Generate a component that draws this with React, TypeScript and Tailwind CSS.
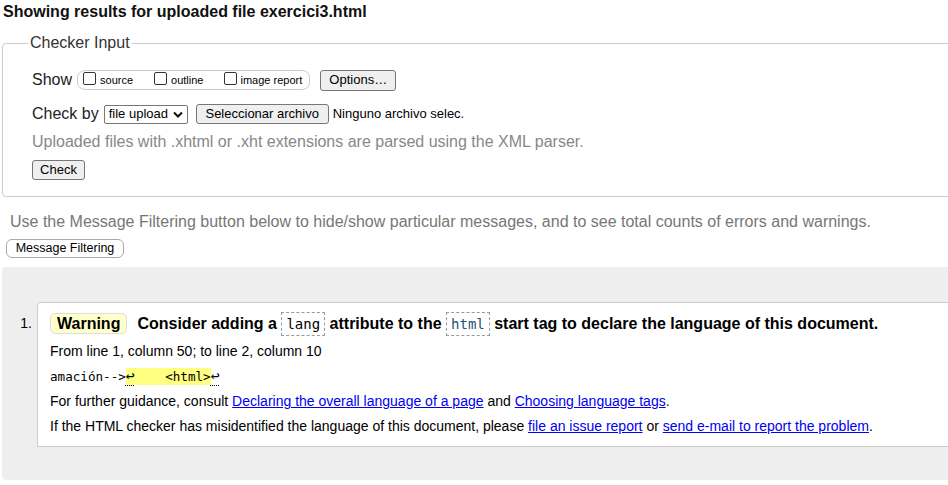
const sans = "font-['Liberation_Sans',Arial,sans-serif]";
const mono = "font-['DejaVu_Sans_Mono','Liberation_Mono',monospace]";

function Box({ label }: { label: string }) {
  return (
    <span className="flex items-center">
      <span className="mb-[3px] h-[13px] w-[13px] rounded-[2px] border border-[#333] bg-white" />
      <span className="ml-[4px] text-[11px] leading-[13px]">{label}</span>
    </span>
  );
}

function Btn({ children, className = "" }: { children: React.ReactNode; className?: string }) {
  return (
    <span
      className={`inline-flex h-[20px] items-center rounded-[3px] border border-[#767676] bg-[#efefef] px-[7px] text-[13px] ${className}`}
    >
      {children}
    </span>
  );
}

function Code({ children, className = "" }: { children: React.ReactNode; className?: string }) {
  return (
    <span
      className={`${mono} inline-block border border-dashed border-[#999] bg-white px-[4px] text-[14px] font-normal leading-[22px] ${className}`}
    >
      {children}
    </span>
  );
}

export default function App() {
  return (
    <div className={`${sans} h-[485px] w-[948px] overflow-hidden bg-white text-black`}>
      {/* Title */}
      <h1 className="pl-[3px] pt-[2px] text-[16px] font-bold leading-[20px] text-[#111]">
        Showing results for uploaded file exercici3.html
      </h1>

      {/* Checker input */}
      <fieldset className="-mr-[30px] ml-[2px] mt-[11px] rounded-bl-[4px] rounded-tl-[4px] border border-[#ccc] pb-[16px] pl-[29px] pt-[16px]">
        <legend className="-ml-[4px] px-[2px] text-[16px] leading-[20px] text-[#333]">Checker Input</legend>

        <div className="flex h-[22px] items-center">
          <span className="text-[16px] leading-[20px] text-[#222]">Show</span>
          <span className="ml-[5px] flex h-[20px] items-center rounded-[8px] border border-[#ccc] pl-[5px] pr-[7px]">
            <Box label="source" />
            <span className="w-[21px]" />
            <Box label="outline" />
            <span className="w-[21px]" />
            <span className="flex items-center">
              <span className="mb-[3px] h-[13px] w-[13px] rounded-[2px] border border-[#333] bg-white" />
              <span className="ml-[3px] text-[11px] leading-[13px]">image report</span>
            </span>
          </span>
          <Btn className="ml-[10px] h-[21px] w-[76px] justify-center px-0">Options…</Btn>
        </div>

        <div className="mt-[12px] flex h-[22px] items-center">
          <span className="text-[16px] leading-[20px] text-[#222]">Check by</span>
          <span className="ml-[5px] flex h-[19px] w-[84px] items-center justify-between rounded-[2px] border border-[#767676] bg-white pl-[4px] pr-[4px] text-[13px]">
            file upload
            <svg width="10" height="7" viewBox="0 0 10 7" className="mt-[1px]">
              <polyline points="1,1.5 5,5.5 9,1.5" fill="none" stroke="#111" strokeWidth="2" />
            </svg>
          </span>
          <Btn className="ml-[8px] w-[133px] justify-center px-0">Seleccionar archivo</Btn>
          <span className="ml-[4px] text-[13px]">Ninguno archivo selec.</span>
        </div>

        <p className="mt-[7px] text-[16px] leading-[20px] text-[#888]">
          Uploaded files with .xhtml or .xht extensions are parsed using the XML parser.
        </p>

        <div className="mt-[8px] flex">
          <Btn className="w-[53px] justify-center px-0">Check</Btn>
        </div>
      </fieldset>

      {/* Filtering */}
      <p className="ml-[10px] mt-[15px] text-[16px] leading-[20px] text-[#777]">
        Use the Message Filtering button below to hide/show particular messages, and to see total counts of errors and
        warnings.
      </p>
      <div className="ml-[6px] mt-[7px] flex">
        <span className="inline-flex h-[19px] w-[118px] items-center justify-center rounded-[6px] border border-[#aaa] bg-white text-[12.5px]">
          Message Filtering
        </span>
      </div>

      {/* Results */}
      <div className="-mr-[30px] ml-[2px] mt-[9px] flex h-[213px] rounded-[4px] bg-[#eee] pt-[35px]">
        <div className="w-[35px] shrink-0 pr-[5px] pt-[9px] text-right text-[14px] leading-[25px]">1.</div>
        <div className="h-[145px] flex-1 rounded-tl-[4px] border border-[#ccc] bg-white pl-[12px] pt-[8px]">
          <div className="text-[16px] font-bold leading-[25px]">
            <span className="inline-block rounded-[5px] border border-[#ddd] bg-[#ffc] px-[6px] leading-[19px]">
              Warning
            </span>
            <span className="ml-[10px]">Consider adding a </span>
            <Code>lang</Code> attribute to the <Code className="text-[#1f5575]">html</Code> start tag to declare the
            language of this document.
          </div>
          <div className="mt-[3px] text-[14px] leading-[25px]">
            <p>From line 1, column 50; to line 2, column 10</p>
            <p className={`${mono} text-[12.6px]`}>
              amación--&gt;
              <span className="bg-[#ffff80] py-[1px]">
                <span className="text-[15px] underline decoration-dotted decoration-1 underline-offset-[4px]">↩</span>
                <span className="whitespace-pre">{"    "}&lt;html&gt;</span>
              </span>
              <span className="text-[15px] underline decoration-dotted decoration-1 underline-offset-[4px]">↩</span>
            </p>
            <p>
              For further guidance, consult{" "}
              <a href="#" className="text-[#00e] underline">
                Declaring the overall language of a page
              </a>{" "}
              and{" "}
              <a href="#" className="text-[#00e] underline">
                Choosing language tags
              </a>
              .
            </p>
            <p>
              If the HTML checker has misidentified the language of this document, please{" "}
              <a href="#" className="text-[#00e] underline">
                file an issue report
              </a>{" "}
              or{" "}
              <a href="#" className="text-[#00e] underline">
                send e-mail to report the problem
              </a>
              .
            </p>
          </div>
        </div>
      </div>
    </div>
  );
}
